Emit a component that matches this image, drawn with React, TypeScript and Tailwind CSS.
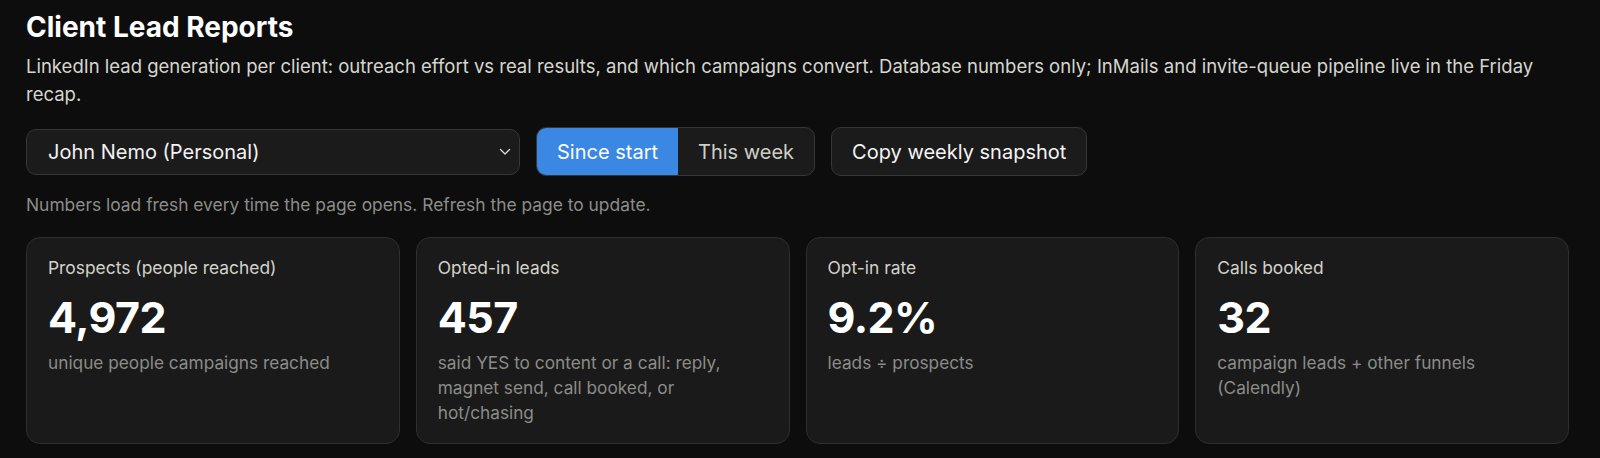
import React from "react";

const cards = [
  {
    label: "Prospects (people reached)",
    value: "4,972",
    sub: "unique people campaigns reached",
  },
  {
    label: "Opted-in leads",
    value: "457",
    sub: "said YES to content or a call: reply, magnet send, call booked, or hot/chasing",
  },
  {
    label: "Opt-in rate",
    value: "9.2%",
    sub: "leads ÷ prospects",
  },
  {
    label: "Calls booked",
    value: "32",
    sub: "campaign leads + other funnels (Calendly)",
  },
];

export default function App() {
  return (
    <div
      className="min-h-[458px] w-full bg-[#0d0d0d] pl-[26px] pr-[31px] pt-[10px] pb-4 antialiased"
      style={{ fontFamily: "Inter, 'Noto Sans', 'Liberation Sans', sans-serif" }}
    >
      <h1 className="text-[28px] font-bold leading-[34px] text-white">
        Client Lead Reports
      </h1>
      <p className="mt-2 text-[18.5px] leading-[28px] text-[#d6d6cf]">
        LinkedIn lead generation per client: outreach effort vs real results, and which campaigns convert.
        Database numbers only; InMails and invite-queue pipeline live in the Friday recap.
      </p>

      <div className="mt-[19px] flex items-center gap-4">
        <div className="flex h-[46px] w-[494px] items-center justify-between rounded-[10px] border border-[#363636] bg-[#1b1b1b] pl-[21px] pr-[7px]">
          <span className="text-[20px] text-[#f2f2f2]">John Nemo (Personal)</span>
          <svg width="12" height="8" viewBox="0 0 12 8" fill="none" className="mr-[1px]">
            <path d="M1.5 1.5 L6 6 L10.5 1.5" stroke="#d8d8d8" strokeWidth="1.4" strokeLinecap="round" strokeLinejoin="round" />
          </svg>
        </div>

        <div className="flex h-[49px] overflow-hidden rounded-[10px] border border-[#363636] bg-[#1b1b1b]">
          <button className="flex items-center bg-[#3a87e4] px-5 text-[20px] text-white">
            Since start
          </button>
          <button className="flex items-center px-5 text-[20px] text-[#cfcfc8]">
            This week
          </button>
        </div>

        <button className="flex h-[49px] items-center rounded-[10px] border border-[#363636] bg-[#1b1b1b] px-5 text-[20px] text-[#f4f4f4]">
          Copy weekly snapshot
        </button>
      </div>

      <p className="mt-[17px] text-[17.4px] leading-[24px] text-[#8c8c88]">
        Numbers load fresh every time the page opens. Refresh the page to update.
      </p>

      <div className="mt-5 grid grid-cols-4 gap-4">
        {cards.map((c) => (
          <div
            key={c.label}
            className="rounded-[14px] border border-[#2e2e2e] bg-[#1a1a1a] px-[21px] pt-[18px] pb-[18px]"
          >
            <div className="text-[17.4px] leading-[24px] text-[#d2d2cb]">{c.label}</div>
            <div className="mt-[13px] text-[43px] font-bold leading-[48px] tracking-[-0.5px] text-white">
              {c.value}
            </div>
            <div className="mt-[9px] text-[17.25px] leading-[25px] text-[#8c8c88]">{c.sub}</div>
          </div>
        ))}
      </div>
    </div>
  );
}
